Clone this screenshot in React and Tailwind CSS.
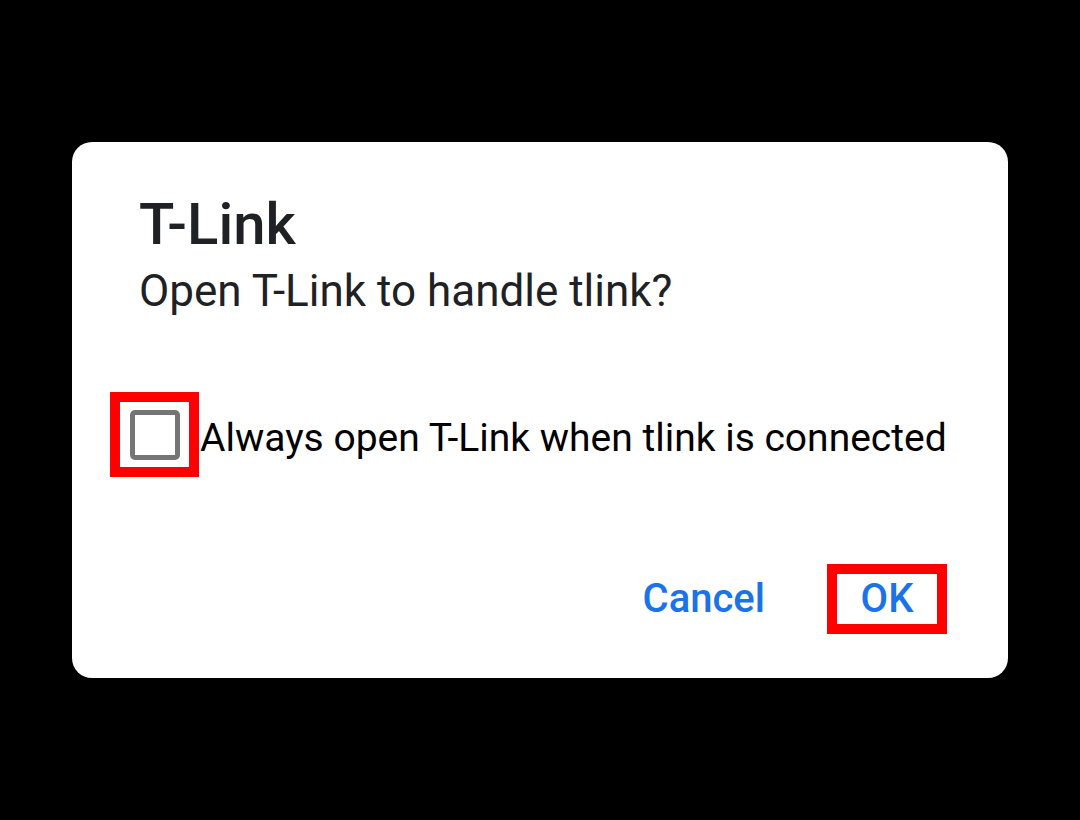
export default function App() {
  return (
    <div className="h-[820px] w-[1080px] bg-black pt-[142px] pl-[72px]" style={{ fontFamily: 'Roboto, "Noto Sans", sans-serif' }}>
      {/* Dialog */}
      <div className="h-[536px] w-[936px] rounded-[20px] bg-white flex flex-col">
        <div className="pl-[67px] pt-[47px]">
          <div className="text-[58px] leading-[70px] font-medium text-[#202124]">T-Link</div>
          <div className="text-[44px] leading-[56px] text-[#202124] mt-[4px]">Open T-Link to handle tlink?</div>
        </div>

        {/* Checkbox row */}
        <div className="mt-[73px] ml-[38px] flex items-center">
          <div className="w-[89px] h-[85px] border-[10px] border-[#ff0000] flex items-center justify-center">
            <div className="w-[50px] h-[50px] rounded-[5px] border-[5px] border-[#757575]" />
          </div>
          <span className="text-[39px] leading-[56px] text-black ml-px mt-[6px]">Always open T-Link when tlink is connected</span>
        </div>

        {/* Actions */}
        <div className="mt-auto mb-[44px] mr-[61px] flex items-center justify-end">
          <button className="text-[40px] font-medium text-[#1a73e8] leading-none mr-[62px]">Cancel</button>
          <button className="w-[120px] h-[70px] border-[10px] border-[#ff0000] text-[40px] font-medium text-[#1a73e8] leading-none flex items-center justify-center">OK</button>
        </div>
      </div>
    </div>
  )
}
